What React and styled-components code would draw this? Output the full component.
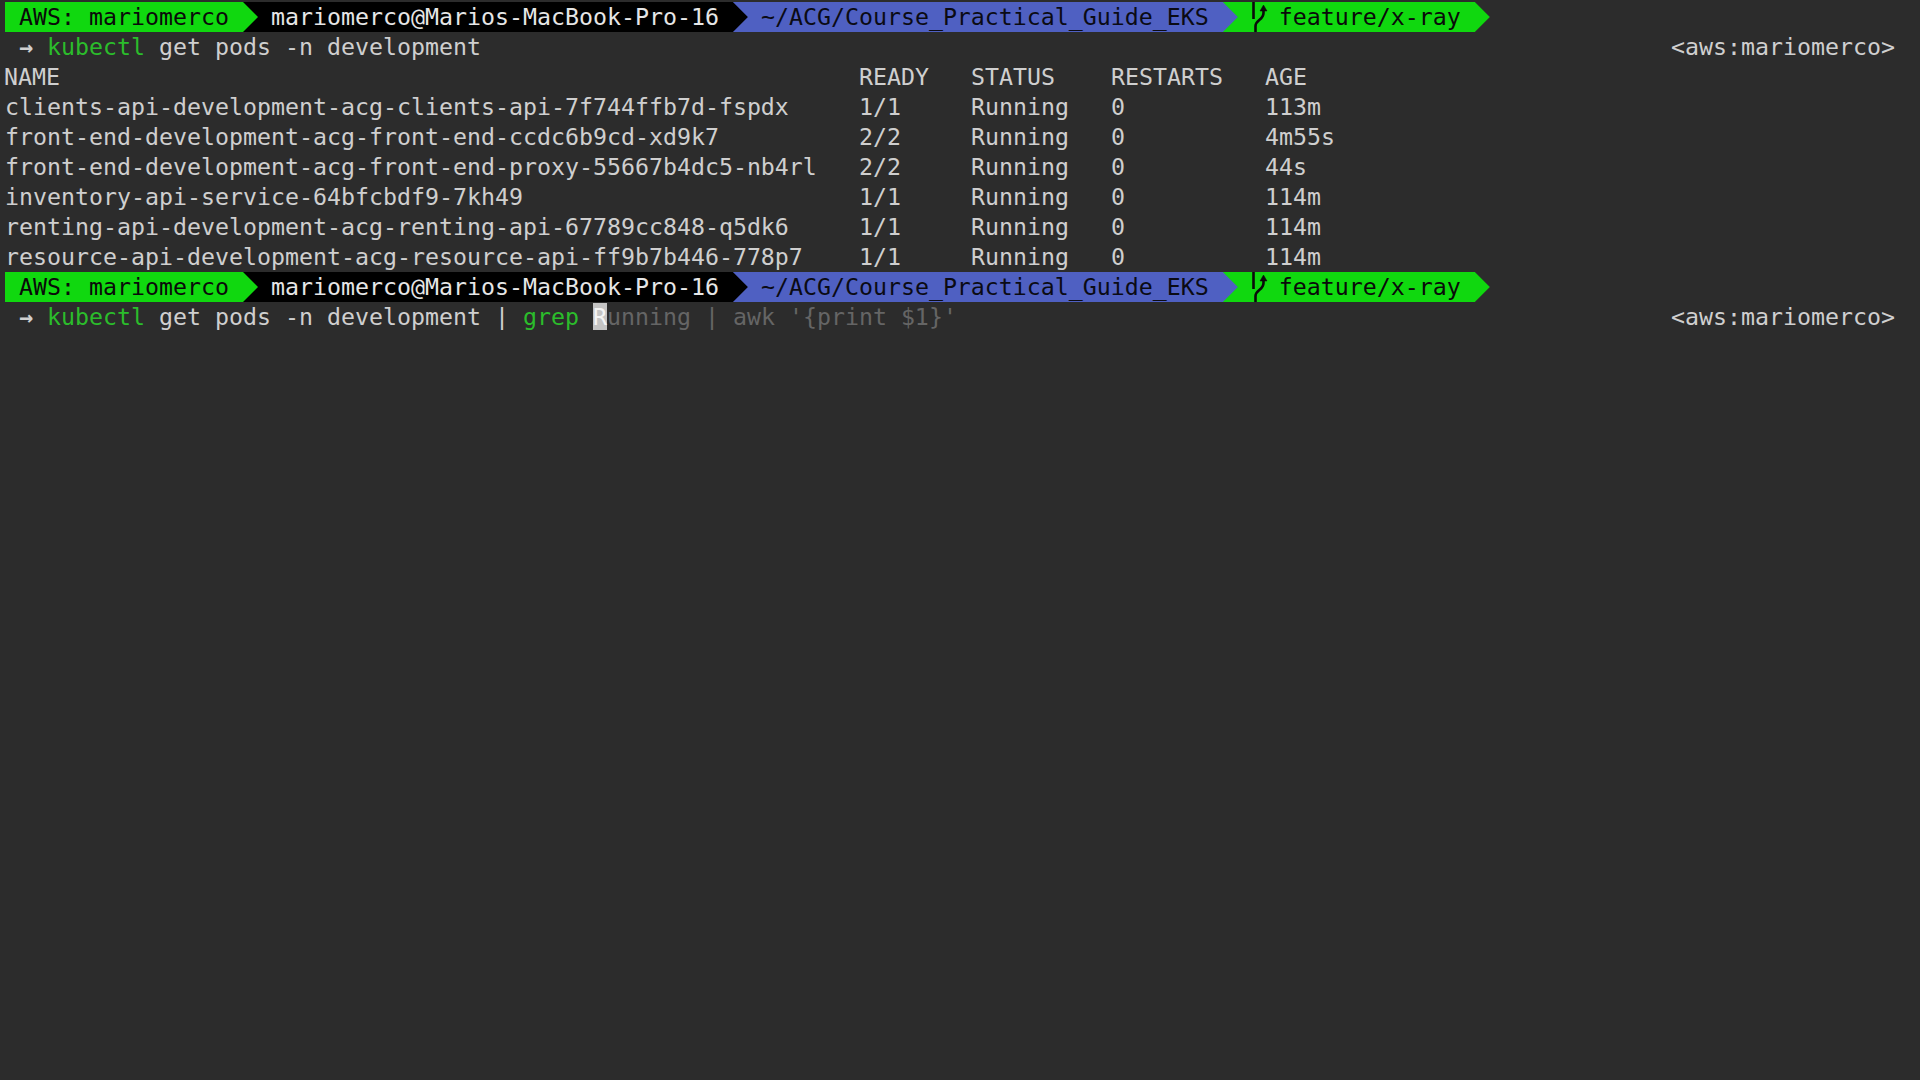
import React from 'react';
import styled, { createGlobalStyle } from 'styled-components';

const GlobalStyle = createGlobalStyle`
	html, body {
		margin: 0;
		padding: 0;
		background: #2c2c2c;
	}
`;
const Terminal = styled.main`
	width: 1920px;
	height: 1080px;
	box-sizing: border-box;
	padding-top: 2px;
	overflow: hidden;
	background: #2c2c2c;
	color: #cfcfcf;
	font-family: 'DejaVu Sans Mono', 'Liberation Mono', monospace;
	font-size: 23.25px;
	line-height: 30px;
	white-space: pre;
`;
const PowerlineBar = styled.div`
	display: flex;
	height: 30px;
	padding-left: 5px;
`;
const Segment = styled.div`
	position: relative;
	display: flex;
	align-items: center;
	height: 30px;
	padding: 0 14px 0 ${(props) => (props.first ? '14px' : '28px')};
	background: ${(props) => props.bg};
	color: ${(props) => props.fg};
	z-index: ${(props) => props.layer};
	&::after {
		content: '';
		position: absolute;
		top: 0;
		left: 100%;
		width: 15px;
		height: 30px;
		background: ${(props) => props.bg};
		clip-path: polygon(0 0, 100% 50%, 0 100%);
	}
`;
const BranchIcon = styled.svg`
	width: 28px;
	height: 30px;
	flex: none;
`;
const PromptRow = styled.div`
	display: flex;
	justify-content: space-between;
	height: 30px;
	padding: 0 25px 0 19px;
`;
const Arrow = styled.span`
	display: inline-block;
	width: 28px;
	font-weight: bold;
`;
const Command = styled.span`
	color: #2bbd2b;
`;
const Ghost = styled.span`
	color: #656565;
`;
const Cursor = styled.span`
	background: #c4c4c4;
	color: #f4f4f4;
`;
const TableRow = styled.div`
	display: grid;
	grid-template-columns: 854px 112px 140px 154px 1fr;
	height: 30px;
	padding-left: 5px;
`;
const HeadName = styled.span`
	margin-left: -1px;
`;

const pods = [
	['clients-api-development-acg-clients-api-7f744ffb7d-fspdx', '1/1', 'Running', '0', '113m'],
	['front-end-development-acg-front-end-ccdc6b9cd-xd9k7', '2/2', 'Running', '0', '4m55s'],
	['front-end-development-acg-front-end-proxy-55667b4dc5-nb4rl', '2/2', 'Running', '0', '44s'],
	['inventory-api-service-64bfcbdf9-7kh49', '1/1', 'Running', '0', '114m'],
	['renting-api-development-acg-renting-api-67789cc848-q5dk6', '1/1', 'Running', '0', '114m'],
	['resource-api-development-acg-resource-api-ff9b7b446-778p7', '1/1', 'Running', '0', '114m'],
];

const Powerline = () => (
	<PowerlineBar>
		<Segment first bg="#10d80f" fg="#0a0a0a" layer={4}>AWS: mariomerco</Segment>
		<Segment bg="#000000" fg="#e6e6e6" layer={3}>mariomerco@Marios-MacBook-Pro-16</Segment>
		<Segment bg="#4f60c2" fg="#0b0b14" layer={2}>~/ACG/Course_Practical_Guide_EKS</Segment>
		<Segment bg="#10d80f" fg="#0a0a0a" layer={1}>
			<BranchIcon viewBox="0 0 28 30" fill="none" stroke="#0a0a0a">
				<path d="M2.5 0V17" strokeWidth="2.6" />
				<path d="M4.5 30V24C4.5 18 12.5 18 12.5 11V7" strokeWidth="2.6" />
				<path d="M9 9L12.5 3L16 9Z" fill="#0a0a0a" strokeWidth="0.5" />
			</BranchIcon>
			feature/x-ray
		</Segment>
	</PowerlineBar>
);

const App = () => (
	<Terminal>
		<GlobalStyle />
		<Powerline />
		<PromptRow>
			<span>
				<Arrow>→</Arrow>
				<Command>kubectl</Command> get pods -n development
			</span>
			<span>&lt;aws:mariomerco&gt;</span>
		</PromptRow>
		<TableRow>
			<HeadName>NAME</HeadName>
			<span>READY</span>
			<span>STATUS</span>
			<span>RESTARTS</span>
			<span>AGE</span>
		</TableRow>
		{pods.map((pod) => (
			<TableRow key={pod[0]}>
				{pod.map((value, i) => (
					<span key={i}>{value}</span>
				))}
			</TableRow>
		))}
		<Powerline />
		<PromptRow>
			<span>
				<Arrow>→</Arrow>
				<Command>kubectl</Command> get pods -n development | <Command>grep</Command> <Cursor>R</Cursor>
				<Ghost>unning | awk '{'{'}print $1{'}'}'</Ghost>
			</span>
			<span>&lt;aws:mariomerco&gt;</span>
		</PromptRow>
	</Terminal>
);

export default App;
